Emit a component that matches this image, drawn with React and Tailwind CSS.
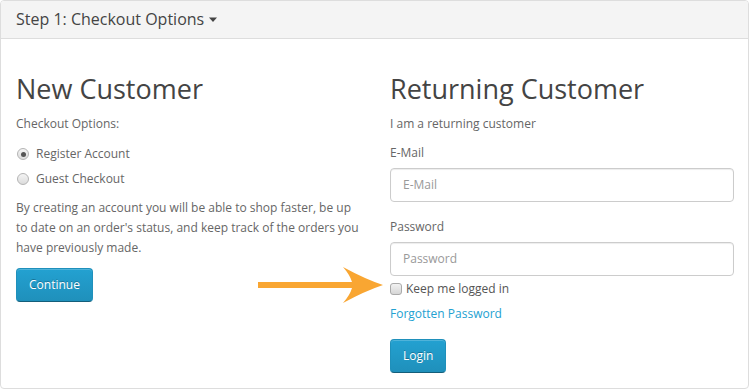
const FONT = "font-['Open_Sans',sans-serif]";

function Radio({ checked, label }) {
  return (
    <label className="flex items-center h-5 gap-[7px]">
      <span className="ml-[1px] w-[12px] h-[12px] rounded-full border border-[#b4b4b4] bg-gradient-to-b from-[#f4f4f4] to-[#dcdcdc] flex items-center justify-center">
        {checked && <span className="w-[5px] h-[5px] rounded-full bg-[#555]" />}
      </span>
      <span>{label}</span>
    </label>
  );
}

function Btn({ children }) {
  return (
    <button className="h-[34px] px-3 rounded-[4px] border border-[#1f90bb] border-b-[#145e7a] bg-gradient-to-b from-[#23a1d1] to-[#1f90bb] text-white text-[12px] [text-shadow:0_-1px_0_rgba(0,0,0,0.25)] shadow-[inset_0_1px_0_rgba(255,255,255,0.2)]">
      {children}
    </button>
  );
}

function Field({ label, placeholder }) {
  return (
    <div className="flex flex-col">
      <div className="h-5 leading-5 mb-[5px] text-[#666]">{label}</div>
      <div className="h-[34px] rounded-[4px] border border-[#ccc] shadow-[inset_0_1px_1px_rgba(0,0,0,0.075)] px-3 flex items-center text-[#999]">
        {placeholder}
      </div>
    </div>
  );
}

export default function App() {
  return (
    <div className={`${FONT} w-[750px] h-[390px] bg-white text-[12px] text-[#666] relative`}>
      <div className="w-[749px] h-[389px] border border-[#ddd] rounded-[4px] overflow-hidden flex flex-col">
        <div className="h-[38px] bg-[#f4f4f4] border-b border-[#ddd] px-[15px] pb-[1px] flex items-center text-[16px] text-[#444]">
          Step 1: Checkout Options
          <svg width="10" height="6" viewBox="0 0 10 6" className="ml-[4px] mt-[2px]">
            <path d="M1 0.5 L9 0.5 L5 5 Z" fill="#444" />
          </svg>
        </div>
        <div className="grid grid-cols-[374px_1fr] pt-[35px]">
          {/* New customer */}
          <div className="px-[15px]">
            <h2 className="text-[27px] leading-[30px] text-[#444] mb-[10px]">New Customer</h2>
            <p className="leading-5 mb-[10px]">Checkout Options:</p>
            <Radio checked label="Register Account" />
            <div className="mt-[5px]">
              <Radio label="Guest Checkout" />
            </div>
            <p className="leading-5 mt-[9px] mb-[10px]">
              By creating an account you will be able to shop faster, be up to date on an order's status, and keep track of the orders you have previously made.
            </p>
            <Btn>Continue</Btn>
          </div>
          {/* Returning customer */}
          <div className="pl-[15px] pr-[14px]">
            <h2 className="text-[27px] leading-[30px] text-[#444] mb-[10px]">Returning Customer</h2>
            <p className="leading-5 mb-[9px]">I am a returning customer</p>
            <Field label="E-Mail" placeholder="E-Mail" />
            <div className="mt-[15px]">
              <Field label="Password" placeholder="Password" />
            </div>
            <label className="flex items-center h-5 gap-[4px] mt-[3px]">
              <span className="w-[12px] h-[12px] rounded-[3px] border border-[#aaa] bg-gradient-to-b from-[#f2f2f2] to-[#d6d6d6]" />
              <span className="text-[12px] text-[#555]">Keep me logged in</span>
            </label>
            <a className="block leading-5 mt-[5px] text-[#23a1d1]">Forgotten Password</a>
            <div className="mt-[15px]">
              <Btn>Login</Btn>
            </div>
          </div>
        </div>
      </div>
      <svg className="absolute left-0 top-0 pointer-events-none" width="750" height="390">
        <path
          d="M258 282 L352 282 Q350 275 343 267 Q365 279 383 285 Q365 291 343 303 Q350 295 352 288 L258 288 Z"
          fill="#f9a632"
        />
      </svg>
    </div>
  );
}
